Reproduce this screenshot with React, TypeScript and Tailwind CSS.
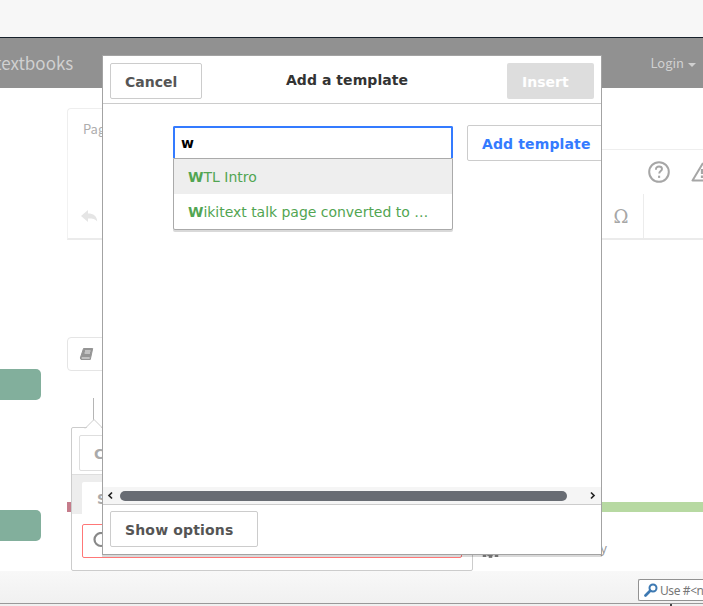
import React from "react";

const source = "font-['Noto_Sans_CJK_SC',sans-serif]";

function SiteHeader() {
  return (
    <header className="shrink-0">
      <div className="h-[37px] bg-[#f7f7f7]" />
      <div className="h-px bg-[#17212b]" />
      <div className={`flex h-[50px] items-center justify-between overflow-hidden bg-[#919191] text-[#d0d0d0] ${source}`}>
        <span className="-ml-[5px] pb-px text-[17px] leading-[48px]">textbooks</span>
        <span className="flex items-center gap-[4px] pr-[7px] text-[13px] leading-[50px]">
          Login
          <span className="mt-[3px] border-x-4 border-t-4 border-x-transparent border-t-[#d0d0d0]" />
        </span>
      </div>
    </header>
  );
}

function Sidebar() {
  return (
    <aside className="flex w-[67px] shrink-0 flex-col pt-[281px]">
      <div className="h-[31px] w-[41px] rounded-r-[5px] bg-[#82af9c]" />
      <div className="mt-[110px] h-[31px] w-[41px] rounded-r-[5px] bg-[#82af9c]" />
    </aside>
  );
}

function Editor() {
  return (
    <main className="flex min-w-0 flex-1 flex-col overflow-hidden pt-5">
      <div className="flex h-[42px] shrink-0">
        <div className={`w-[70px] rounded-tl-[4px] border-l border-t border-[#eeeeee] pl-[15px] pt-[9px] text-[13px] leading-[22px] text-[#adadad] ${source}`}>Page</div>
        <div className="flex-1 border-b border-[#eeeeee]" />
      </div>
      <div className="flex h-[90px] shrink-0 flex-col border-b-2 border-l border-b-[#ebebeb] border-l-[#f2f2f2]">
        <div className="flex h-[44px] items-center justify-end">
          <svg className="mr-[20px] h-6 w-6" viewBox="0 0 24 24" fill="none" stroke="#a6a6a6">
            <circle cx="13" cy="12" r="9.8" strokeWidth="2" />
            <path d="M10 9.7V9c0-1.6 1.2-2.5 3-2.5s3 1 3 2.5c0 2-2.8 2.2-2.8 4.6" strokeWidth="1.9" />
            <path d="M13.1 15.7v2.2" strokeWidth="2.1" />
          </svg>
          <svg className="h-6 w-[13px] shrink-0" viewBox="0 0 13 24" fill="none" stroke="#a6a6a6">
            <path d="M13 3L2.5 20.4H14" strokeWidth="2" strokeLinejoin="round" />
            <path d="M12 9v5M12 15.5v2.4" strokeWidth="2.3" />
          </svg>
        </div>
        <div className="flex h-[44px] items-center">
          <svg className="ml-[12px] h-[20px] w-[20px]" viewBox="0 0 20 20" fill="#e5e5e5">
            <path d="M1 10l7-6v3.6c5.4 0 9 2.5 9.2 8-1.7-2.8-4.5-3.2-9.2-3.2V16z" />
          </svg>
          <div className="ml-auto flex h-[44px] w-[45px] items-center justify-center border-r border-[#ececec] pt-px font-['DejaVu_Serif',serif] text-[18px] text-[#a6a6a6]">Ω</div>
          <div className="w-[59px]" />
        </div>
      </div>
      <div className="mt-[97px] flex h-[34px] w-[80px] shrink-0 items-center rounded-[4px] border border-[#e5e5e5] pl-[11px]">
        <svg className="h-[16px] w-[16px]" viewBox="0 0 16 16">
          <path d="M4.5 2.5h9.2L11.3 13.5H2L1.3 12z" fill="#959595" stroke="#959595" strokeLinejoin="round" />
          <path d="M6 5h5.5M5.6 7h5.4M2.7 12h8" stroke="#eeeeee" strokeWidth="1" />
        </svg>
      </div>
      <div className="ml-[26px] mt-[27px] h-[24px] w-px shrink-0 bg-[#b5b5b5]" />
      <div className="mt-[80px] flex h-[10px] shrink-0">
        <div className="w-[50px] bg-[#c57c8b]" />
        <div className="flex-1 bg-[#b7d9a2]" />
      </div>
      <div className="flex justify-between pl-[414px] pr-[96px] pt-[27px]">
        <svg className="mt-[2px] h-[18px] w-[18px]" viewBox="0 0 18 18" fill="none" stroke="#858585">
          <circle cx="9" cy="9" r="4.5" strokeWidth="3.5" />
          <path d="M9.5 1v16M1 9h16M3.5 2.5v13.5M15.5 2.5v13.5" strokeWidth="3.5" />
        </svg>
        <span className={`text-[13px] leading-[17px] text-[#969696] ${source}`}>y</span>
      </div>
    </main>
  );
}

function Inspector() {
  return (
    <section className="absolute left-[71px] top-[427px] h-[144px] w-[402px] rounded-[2px] border border-[#cccccc] bg-white font-['DejaVu_Sans',sans-serif] font-bold">
      <svg className="absolute -top-[10px] left-[12px] h-[11px] w-[22px]" viewBox="0 0 22 11">
        <path d="M1.5 11L10 1.5L18.5 11" fill="white" />
        <path d="M1 10.5L10 1.5L19 10.5" fill="none" stroke="#cccccc" />
      </svg>
      <div className="h-[47px] border-b border-[#dedede] pl-[7px] pt-[7px]">
        <div className="h-[36px] w-[92px] rounded-[2px] border border-[#dedede] pl-[14px] text-[14px] leading-[36px] text-[#aaaaaa]">Cancel</div>
      </div>
      <div className="h-[39px] bg-[#ededed] pl-[10px] pt-[7px]">
        <div className="h-[32px] w-[100px] rounded-t-[2px] bg-white pl-[15px] text-[14px] leading-[34px] text-[#aaaaaa]">Search</div>
      </div>
      <div className="ml-[10px] mt-[10px] h-[34px] w-[380px] rounded-[2px] border border-[#f77] pl-[10px] pt-[7px]">
        <svg className="h-[18px] w-[18px]" viewBox="0 0 18 18" fill="none" stroke="#888888" strokeWidth="2.2">
          <circle cx="8" cy="7.5" r="6.5" />
          <path d="M12 12l5 5" />
        </svg>
      </div>
    </section>
  );
}

function TemplateField() {
  return (
    <div className="h-[104px] w-[280px] shrink-0">
      <div className="h-[32px] rounded-t-[2px] border-2 border-b-0 border-[#347bff] bg-white pl-[6px] text-[14px] font-bold leading-[31px] text-black">w</div>
      <ul className="h-[72px] rounded-b-[2px] border border-[#aaaaaa] bg-white text-[14px] text-[#52a552] shadow-[0_2px_0_#d9d9d9]">
        <li className="h-[35px] bg-[#eeeeee] pl-[14px] leading-[36px]"><b>W</b>TL Intro</li>
        <li className="h-[35px] whitespace-nowrap pl-[14px] leading-[36px] tracking-[-0.03px]"><b>W</b>ikitext talk page converted to …</li>
      </ul>
    </div>
  );
}

function Dialog() {
  return (
    <section className="absolute left-[102px] top-[55px] flex h-[500px] w-[500px] flex-col border border-[#a3a3a3] bg-white font-['DejaVu_Sans',sans-serif] text-[14px] text-[#555555] shadow-[0_2px_0_rgba(0,0,0,0.15)]">
      <div className="flex h-[48px] shrink-0 items-start justify-between border-b border-[#cccccc] px-[7px] pt-[7px] font-bold">
        <button className="h-[36px] w-[92px] rounded-[2px] border border-[#cccccc] pl-[14px] text-left leading-[36px]">Cancel</button>
        <h1 className="ml-[-15px] leading-[34px] tracking-[0.06px] text-[#333333]">Add a template</h1>
        <button className="h-[36px] w-[87px] rounded-[2px] bg-[#dddddd] pl-[15px] text-left leading-[38px] text-white">Insert</button>
      </div>
      <div className="flex min-h-0 flex-1 items-start overflow-hidden pl-[70px] pt-[22px]">
        <TemplateField />
        <button className="-mt-px ml-[14px] h-[36px] w-[145px] shrink-0 whitespace-nowrap rounded-[2px] border border-[#cccccc] pl-[14px] text-left font-bold leading-[36px] tracking-[0.13px] text-[#347bff]">Add template</button>
      </div>
      <div className="flex h-[17px] shrink-0 items-center bg-[#f5f5f5] pl-[4px] pr-[5px]">
        <svg className="h-[9px] w-[7px]" viewBox="0 0 7 9"><path d="M5 1.5L2 4.5L5 7.5" fill="none" stroke="#222" strokeWidth="1.7" /></svg>
        <div className="ml-[6px] h-[10px] w-[447px] rounded-full bg-[#686c73]" />
        <svg className="ml-auto h-[9px] w-[7px]" viewBox="0 0 7 9"><path d="M2 1.5L5 4.5L2 7.5" fill="none" stroke="#222" strokeWidth="1.7" /></svg>
      </div>
      <div className="h-[50px] shrink-0 border-t border-[#cccccc] pl-[7px] pt-[6px]">
        <button className="h-[36px] w-[148px] rounded-[2px] border border-[#cccccc] pl-[14px] text-left font-bold leading-[36px] tracking-[0.16px]">Show options</button>
      </div>
    </section>
  );
}

function Footer() {
  return (
    <footer className="relative h-[35px] shrink-0 bg-linear-to-b from-[#f8f8f8] to-[#f0f0f0] pt-[8px]">
      <div className="ml-auto flex h-[22px] w-[65px] items-center overflow-hidden rounded-l-[2px] border border-r-0 border-[#929292] bg-white pl-[5px] font-['Noto_Sans',sans-serif] text-[12px] tracking-[-0.4px] text-[#777777]">
        <svg className="h-[14px] w-[14px] shrink-0" viewBox="0 0 14 14" fill="none" stroke="#3d79b2">
          <circle cx="9" cy="5" r="3.5" strokeWidth="2" />
          <path d="M6.2 7.8L1.5 12.5" strokeWidth="2.7" strokeLinecap="round" />
        </svg>
        <span className="ml-[2px] mt-[2px] whitespace-nowrap">Use #&lt;n</span>
      </div>
      <div className="mt-[2px] h-px bg-[#999999]" />
      <div className="ml-[670px] h-[2px] w-[2px] bg-[#444444]" />
    </footer>
  );
}

export default function App() {
  return (
    <div className="relative flex h-[606px] w-[703px] flex-col overflow-hidden bg-white">
      <SiteHeader />
      <div className="flex min-h-0 flex-1">
        <Sidebar />
        <Editor />
      </div>
      <Footer />
      <Inspector />
      <Dialog />
    </div>
  );
}
